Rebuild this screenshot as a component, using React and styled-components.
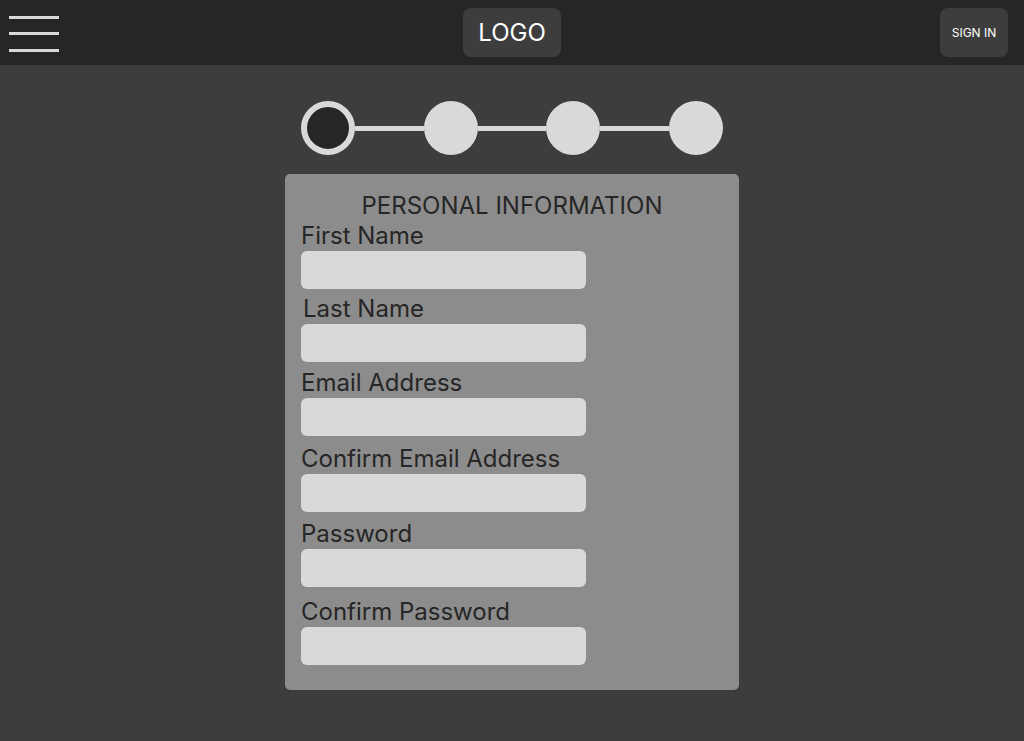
import styled, { createGlobalStyle } from "styled-components";

const GlobalStyle = createGlobalStyle`
  body {
    margin: 0;
    background: #3d3d3d;
    font-family: Inter, "Noto Sans", sans-serif;
  }
`;

const Header = styled.header`
  height: 65px;
  background: #262626;
  display: flex;
  align-items: center;
  justify-content: space-between;
  padding: 0 16px 0 9px;
  box-sizing: border-box;
  position: relative;
`;

const Burger = styled.button`
  width: 50px;
  height: 36px;
  padding: 0;
  border: none;
  background: none;
  display: flex;
  flex-direction: column;
  justify-content: space-between;
  margin-top: 2px;
`;

const BurgerLine = styled.span`
  display: block;
  height: 3px;
  background: #d9d9d9;
`;

const Logo = styled.div`
  position: absolute;
  left: 463px;
  top: 8px;
  width: 98px;
  height: 49px;
  border-radius: 8px;
  background: #3d3d3d;
  color: #ffffff;
  font-size: 24px;
  display: flex;
  align-items: center;
  justify-content: center;
`;

const SignIn = styled.button`
  width: 68px;
  height: 49px;
  border: none;
  border-radius: 8px;
  background: #3d3d3d;
  color: #ffffff;
  font-family: inherit;
  font-size: 12px;
  padding: 0;
`;

const Main = styled.main`
  display: flex;
  flex-direction: column;
  align-items: center;
  padding-top: 36px;
`;

const Stepper = styled.div`
  display: flex;
  align-items: center;
  width: 422px;
`;

const Step = styled.div`
  width: 54px;
  height: 54px;
  border-radius: 50%;
  box-sizing: border-box;
  flex-shrink: 0;
  background: ${(p) => (p.active ? "#262626" : "#d9d9d9")};
  border: ${(p) => (p.active ? "6px solid #d9d9d9" : "none")};
`;

const Connector = styled.div`
  flex: 1;
  height: 5px;
  background: #d9d9d9;
`;

const Card = styled.form`
  margin-top: 19px;
  width: 454px;
  box-sizing: border-box;
  background: #8c8c8c;
  border-radius: 5px;
  padding: 17px 16px 25px;
  display: flex;
  flex-direction: column;
  color: #262626;
`;

const Title = styled.h2`
  margin: 0;
  font-size: 24px;
  font-weight: 400;
  line-height: 30px;
  text-align: center;
`;

const Field = styled.label`
  display: flex;
  flex-direction: column;
  margin-top: ${(p) => p.space || 0}px;
`;

const LabelText = styled.span`
  font-size: 24px;
  line-height: 30px;
  padding-left: ${(p) => p.shift || 0}px;
`;

const Input = styled.input`
  width: 285px;
  height: 38px;
  box-sizing: border-box;
  border: none;
  border-radius: 6px;
  background: #d9d9d9;
  outline: none;
`;

const fields = [
  { label: "First Name", type: "text", space: 0 },
  { label: "Last Name", type: "text", space: 5, shift: 2 },
  { label: "Email Address", type: "email", space: 6 },
  { label: "Confirm Email Address", type: "email", space: 8 },
  { label: "Password", type: "password", space: 7 },
  { label: "Confirm Password", type: "password", space: 10, shift: -1 },
];

const App = () => {
  return (
    <>
      <GlobalStyle />
      <Header>
        <Burger aria-label="menu">
          <BurgerLine />
          <BurgerLine />
          <BurgerLine />
        </Burger>
        <Logo>LOGO</Logo>
        <SignIn>SIGN IN</SignIn>
      </Header>
      <Main>
        <Stepper>
          <Step active />
          <Connector />
          <Step />
          <Connector />
          <Step />
          <Connector />
          <Step />
        </Stepper>
        <Card>
          <Title>PERSONAL INFORMATION</Title>
          {fields.map((f) => (
            <Field key={f.label} space={f.space}>
              <LabelText shift={f.shift}>{f.label}</LabelText>
              <Input type={f.type} />
            </Field>
          ))}
        </Card>
      </Main>
    </>
  );
};

export default App;
